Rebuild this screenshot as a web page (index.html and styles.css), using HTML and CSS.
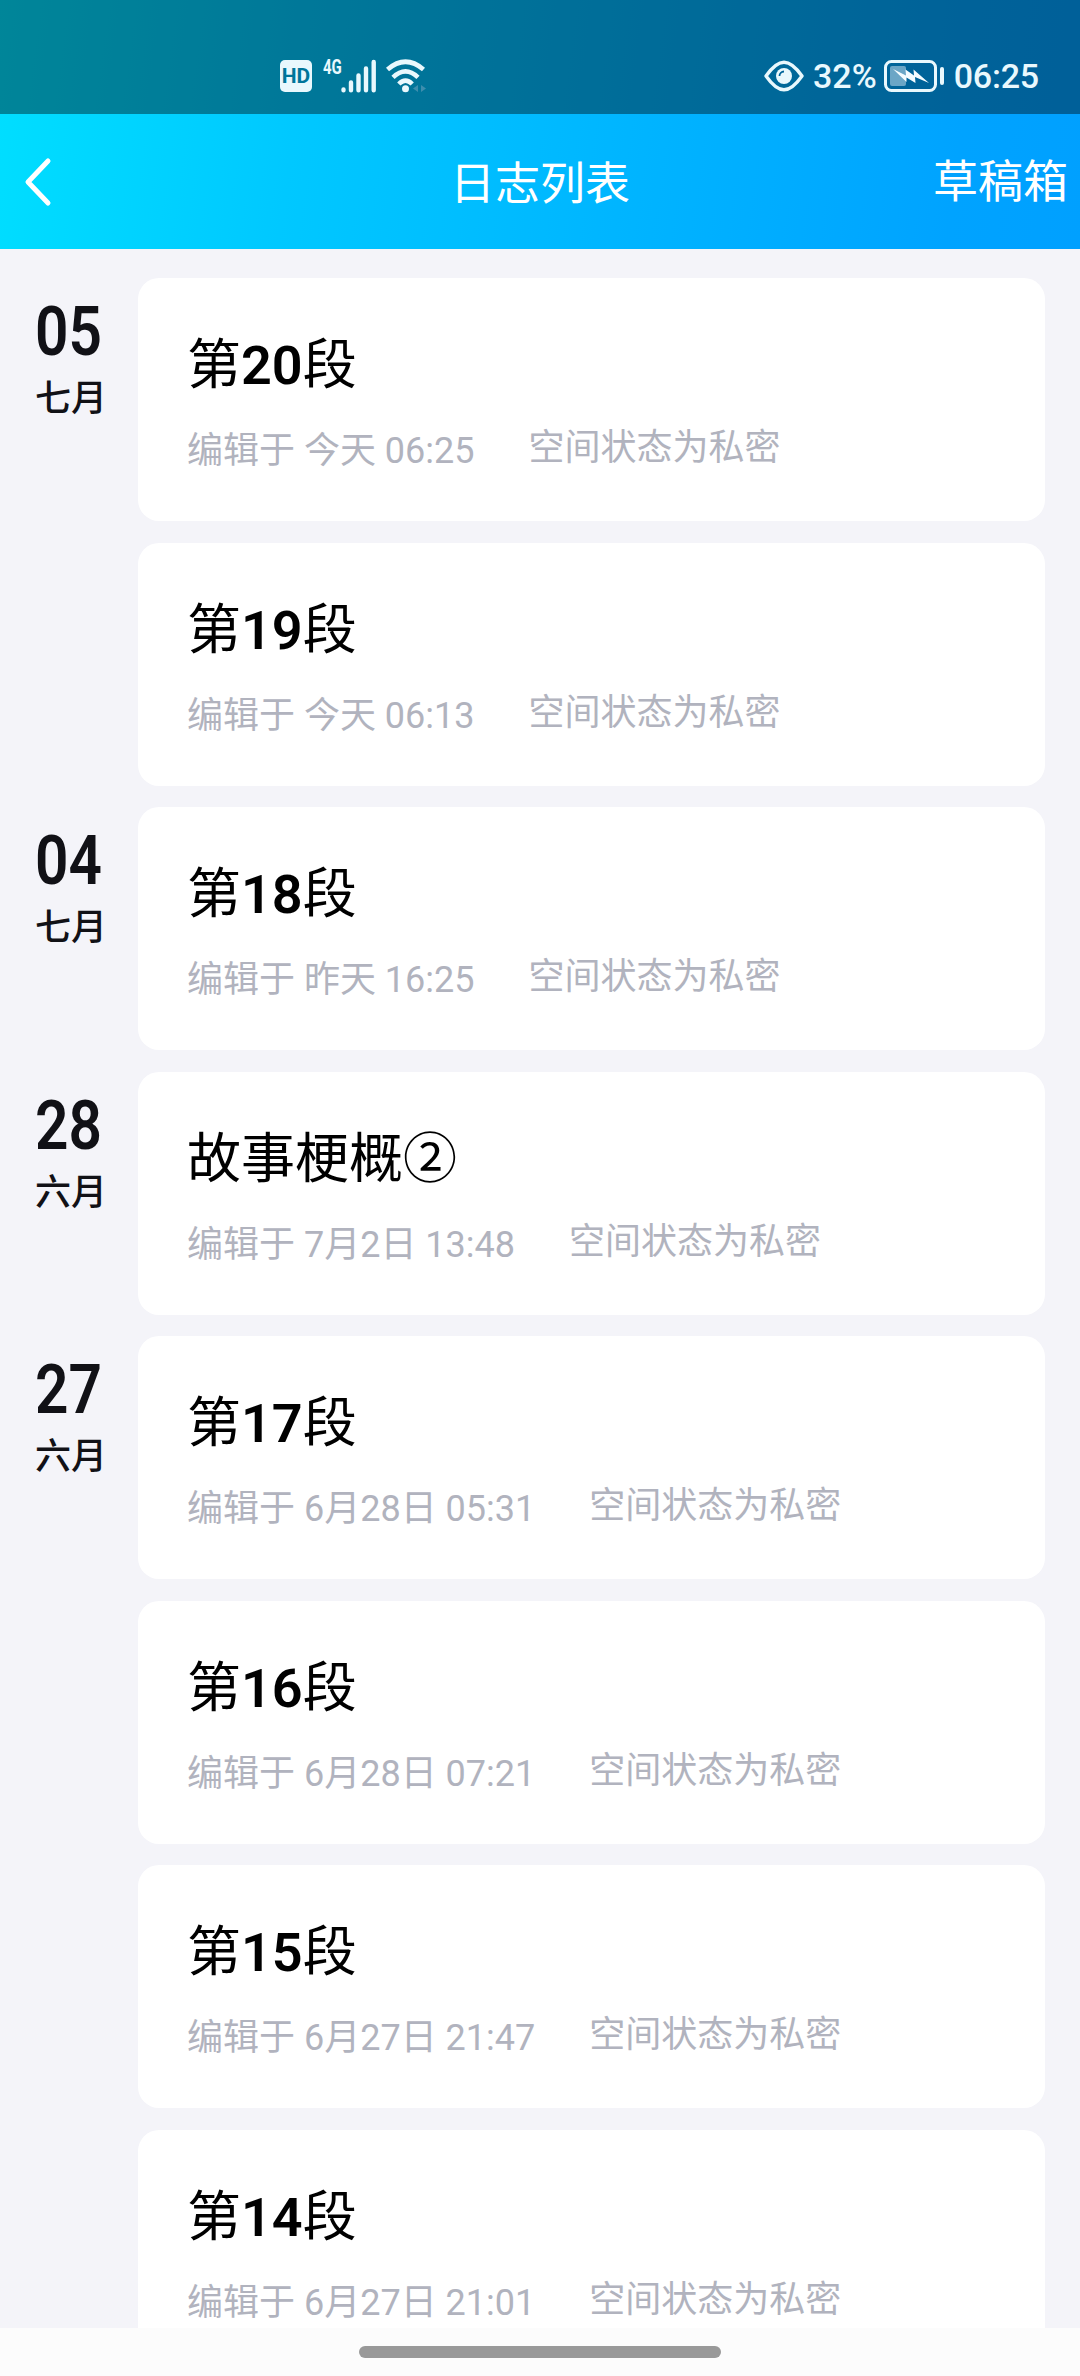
FILE: index.html
```html
<!DOCTYPE html>
<html lang="zh-CN">

<head>
    <meta charset="UTF-8">
    <meta name="viewport" content="width=device-width, initial-scale=1.0">
    <title>日志列表</title>
    <link rel="stylesheet" href="styles.css">
</head>

<body>
    <div class="top">
        <div class="status-bar">
            <div class="status-left">
                <span class="hd">HD</span>
                <span class="net">4G</span>
                <svg class="signal" width="36" height="34" viewBox="0 0 36 34" fill="none" stroke="#e9f8fd" stroke-width="4.4" stroke-linecap="round">
                    <path d="M2.5 30.4v.8M10 23.5v7.7M17.5 16.5v14.7M25 9.500v21.700M32.700 3v28.200" />
                </svg>
                <svg class="wifi" width="42" height="34" viewBox="0 0 42 34" fill="none" stroke="#e9f8fd" stroke-width="4.6">
                    <path d="M1.500 10.500Q19.500-5 37.500 10.500M7 18.300Q19.500 6.500 32 18.300M12.800 25Q19.500 18.200 26.200 25" />
                    <circle cx="19.500" cy="29.700" r="3.500" fill="#e9f8fd" stroke="none" />
                    <path d="M32 26v7l-5-3.500zM35 26v7l5-3.500z" fill="#3d8eae" stroke="none" />
                </svg>
            </div>
            <div class="status-right">
                <svg class="eye" width="40" height="32" viewBox="0 0 40 32">
                    <path d="M2 16C9 6 14 2.200 20 2.200S31 6 38 16C31 26 26 29.800 20 29.800S9 26 2 16z" fill="none" stroke="#e9f8fd" stroke-width="3.400" stroke-linejoin="round" />
                    <circle cx="20" cy="16" r="8" fill="#e9f8fd" />
                    <path d="M15.500 16a4.500 4.500 0 0 1 4.500-4.500" fill="none" stroke="#006499" stroke-width="1.800" />
                </svg>
                <span class="percent">32%</span>
                <svg class="battery" width="61" height="32" viewBox="0 0 61 32">
                    <rect x="1.500" y="1.500" width="50" height="29" rx="6" fill="none" stroke="#e9f8fd" stroke-width="3" />
                    <rect x="6" y="6" width="16" height="20" rx="2" fill="#6ba6c6" />
                    <path d="M9 9L22 15.500 21.500 9.500 30 15.500 29.500 9.500 45 23 31 17 31.500 23 22.500 17.500 22.500 22z" fill="#f4fcff" />
                    <rect x="56" y="7" width="4" height="18" rx="2" fill="#e9f8fd" />
                </svg>
                <span class="time">06:25</span>
            </div>
        </div>
        <div class="nav">
            <svg class="back" width="30" height="52" viewBox="0 0 30 52" fill="none" stroke="#fff" stroke-width="5" stroke-linecap="round" stroke-linejoin="round">
                <path d="M24 5L4 26l20 21" />
            </svg>
            <h1>日志列表</h1>
            <a class="drafts">草稿箱</a>
        </div>
    </div>

    <div class="list">
        <div class="row">
            <div class="date"><span class="day">05</span><span class="month">七月</span></div>
            <div class="card">
                <h2>第<b>20</b>段</h2>
                <div class="meta"><span>编辑于 今天 06:25</span><span class="privacy">空间状态为私密</span></div>
            </div>
        </div>
        <div class="row">
            <div class="date"></div>
            <div class="card">
                <h2>第<b>19</b>段</h2>
                <div class="meta"><span>编辑于 今天 06:13</span><span class="privacy">空间状态为私密</span></div>
            </div>
        </div>
        <div class="row">
            <div class="date"><span class="day">04</span><span class="month">七月</span></div>
            <div class="card">
                <h2>第<b>18</b>段</h2>
                <div class="meta"><span>编辑于 昨天 16:25</span><span class="privacy">空间状态为私密</span></div>
            </div>
        </div>
        <div class="row">
            <div class="date"><span class="day">28</span><span class="month">六月</span></div>
            <div class="card">
                <h2>故事梗概②</h2>
                <div class="meta"><span>编辑于 7月2日 13:48</span><span class="privacy">空间状态为私密</span></div>
            </div>
        </div>
        <div class="row">
            <div class="date"><span class="day">27</span><span class="month">六月</span></div>
            <div class="card">
                <h2>第<b>17</b>段</h2>
                <div class="meta"><span>编辑于 6月28日 05:31</span><span class="privacy">空间状态为私密</span></div>
            </div>
        </div>
        <div class="row">
            <div class="date"></div>
            <div class="card">
                <h2>第<b>16</b>段</h2>
                <div class="meta"><span>编辑于 6月28日 07:21</span><span class="privacy">空间状态为私密</span></div>
            </div>
        </div>
        <div class="row">
            <div class="date"></div>
            <div class="card">
                <h2>第<b>15</b>段</h2>
                <div class="meta"><span>编辑于 6月27日 21:47</span><span class="privacy">空间状态为私密</span></div>
            </div>
        </div>
        <div class="row">
            <div class="date"></div>
            <div class="card">
                <h2>第<b>14</b>段</h2>
                <div class="meta"><span>编辑于 6月27日 21:01</span><span class="privacy">空间状态为私密</span></div>
            </div>
        </div>
    </div>

    <div class="home-bar"><div class="pill"></div></div>
</body>

</html>
```
FILE: styles.css
```css
* {
    box-sizing: border-box;
}

body {
    font-family: Roboto, "Noto Sans CJK SC", sans-serif;
    background-color: #f4f4f9;
    margin: 0;
    height: 2376px;
    display: flex;
    flex-direction: column;
    overflow: hidden;
}

.top {
    flex: none;
    background: linear-gradient(98deg, #00dfff 0%, #00c8ff 28%, #00b5ff 58%, #00a3ff 88%, #00a0ff 100%);
    color: #fff;
}

.status-bar {
    height: 114px;
    padding: 36px 41px 0 280px;
    background-color: rgba(0, 0, 0, 0.4);
    color: #e9f8fd;
    display: flex;
    justify-content: space-between;
}

.status-left,
.status-right {
    display: flex;
    align-items: center;
    height: 80px;
}

.hd {
    width: 32px;
    height: 32px;
    border-radius: 5px;
    background-color: #e9f8fd;
    color: #00759a;
    font-size: 21px;
    font-weight: 700;
    line-height: 33px;
    text-align: center;
}

.net {
    width: 18px;
    margin: -19px 0 0 11px;
    font-size: 20px;
    font-weight: 700;
    line-height: 20px;
    transform: scaleX(0.75);
    transform-origin: left;
}

.signal {
    margin-top: -1px;
}

.wifi {
    margin: -1px 0 0 9px;
}

.percent,
.time {
    font-size: 34px;
    font-weight: 500;
    line-height: 40px;
}

.percent {
    margin: 0 7px 0 9px;
}

.time {
    margin-left: 9px;
    letter-spacing: -0.2px;
}

.nav {
    height: 135px;
    padding: 0 12px 0 24px;
    display: grid;
    grid-template-columns: 1fr auto 1fr;
    align-items: center;
}

.nav h1 {
    margin: 6px 12px 0 0;
    font-size: 45px;
    font-weight: 400;
    line-height: 60px;
}

.drafts {
    justify-self: end;
    margin-top: 3px;
    font-size: 45px;
    line-height: 60px;
}

.list {
    flex: 1;
    min-height: 0;
    padding: 29px 35px 0 0;
    overflow: hidden;
}

.row {
    display: flex;
    height: 243px;
    margin-bottom: 21.5px;
}

.date {
    width: 138px;
    padding: 19px 0 0 35px;
    color: #111116;
}

.day {
    display: block;
    font-size: 69px;
    font-weight: 600;
    line-height: 70px;
    transform: scaleX(0.85);
    transform-origin: left;
}

.month {
    display: block;
    margin-top: 5px;
    font-size: 36px;
    font-weight: 500;
    line-height: 54px;
}

.card {
    flex: 1;
    padding: 52px 49px 0;
    background-color: #fff;
    border-radius: 21px;
}

.card h2 {
    margin: 0;
    color: #000;
    font-size: 54px;
    font-weight: 400;
    line-height: 72px;
}

.card b {
    font-weight: 600;
}

.meta {
    display: flex;
    gap: 54px;
    margin-top: 25px;
    color: #b1b3be;
    font-size: 36px;
    line-height: 48px;
}

.privacy {
    margin-top: -3px;
}

.home-bar {
    flex: none;
    height: 48px;
    padding-top: 18px;
    background-color: #fcfcfc;
}

.pill {
    width: 362px;
    height: 12px;
    margin: 0 auto;
    border-radius: 6px;
    background-color: #999;
}
```
